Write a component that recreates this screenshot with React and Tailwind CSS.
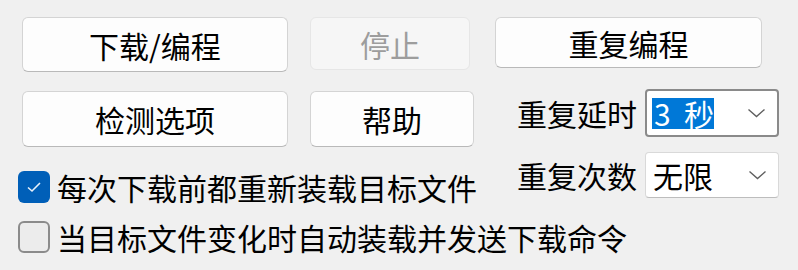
import React from "react"

const font = { fontFamily: '"Noto Sans CJK SC", "Noto Sans", sans-serif' }

function Btn({ children, className, disabled }) {
    return (
        <div className={"flex items-center justify-center rounded-[6px] border text-[30px] leading-none " +
            (disabled
                ? "bg-[#f6f6f6] border-[#e6e6e6] text-[#9d9d9d] "
                : "bg-[#fdfdfd] border-[#d4d4d4] border-b-[#b9b9b9] text-black ") + className}>
            {children}
        </div>
    )
}

function Chevron() {
    return (
        <svg width="19" height="10" viewBox="0 0 19 10" className="shrink-0">
            <path d="M1.5 1.5 L9.5 8.5 L17.5 1.5" fill="none" stroke="#5f5f5f" strokeWidth="1.4" />
        </svg>
    )
}

function Select({ children, focused, className }) {
    return (
        <div className={"flex items-center justify-between rounded-[4px] bg-white pl-[5px] pr-[11px] " +
            (focused ? "border-2 border-[#8a8a8a] " : "border border-[#d9d9d9] border-b-[#bdbdbd] ") + className}>
            {children}
            <Chevron />
        </div>
    )
}

function Check({ checked, children, className }) {
    return (
        <div className={"flex items-center whitespace-nowrap " + className}>
            {checked ? (
                <div className="w-[32px] h-[32px] shrink-0 rounded-[6px] bg-[#005fb8] flex items-center justify-center">
                    <svg width="16" height="12" viewBox="0 0 16 12">
                        <path d="M2 6.5 L6 10 L14 2" fill="none" stroke="#e9f1fa" strokeWidth="1.6" />
                    </svg>
                </div>
            ) : (
                <div className="w-[32px] h-[32px] shrink-0 rounded-[6px] border-2 border-[#8b8b8b] bg-[#ececec]" />
            )}
            <span className="ml-[7px] text-[30px] leading-none text-black">{children}</span>
        </div>
    )
}

export default function App() {
    return (
        <div className="w-[798px] h-[270px] bg-[#f0f0f0] overflow-hidden" style={font}>
            <div className="flex items-start pt-[17px] pl-[22px]">
                <Btn className="w-[266px] h-[55px]">下载/编程</Btn>
                <Btn disabled className="w-[160px] h-[53px] ml-[22px]">停止</Btn>
                <Btn className="w-[267px] h-[51px] ml-[25px]">重复编程</Btn>
            </div>

            <div className="flex items-start">
                <div className="w-[495px] shrink-0">
                    <div className="flex mt-[19px] ml-[22px]">
                        <Btn className="w-[266px] h-[56px]">检测选项</Btn>
                        <Btn className="w-[164px] h-[56px] ml-[22px]">帮助</Btn>
                    </div>
                    <Check checked className="mt-[23px] ml-[18px] h-[33px]">每次下载前都重新装载目标文件</Check>
                    <Check className="mt-[17px] ml-[18px] h-[33px]">当目标文件变化时自动装载并发送下载命令</Check>
                </div>

                <div className="ml-[22px]">
                    <div className="flex items-center mt-[17px] h-[48px]">
                        <span className="text-[30px] leading-none w-[128px] whitespace-nowrap">重复延时</span>
                        <Select focused className="w-[134px] h-[48px]">
                            <span className="bg-[#0078d7] text-white text-[30px] leading-[31px] pl-[2px] w-[62px] whitespace-pre">3  秒</span>
                        </Select>
                    </div>
                    <div className="flex items-center mt-[15px] h-[46px]">
                        <span className="text-[30px] leading-none w-[128px] whitespace-nowrap">重复次数</span>
                        <Select className="w-[134px] h-[46px]">
                            <span className="text-[30px] leading-none ml-[2px]">无限</span>
                        </Select>
                    </div>
                </div>
            </div>
        </div>
    )
}
